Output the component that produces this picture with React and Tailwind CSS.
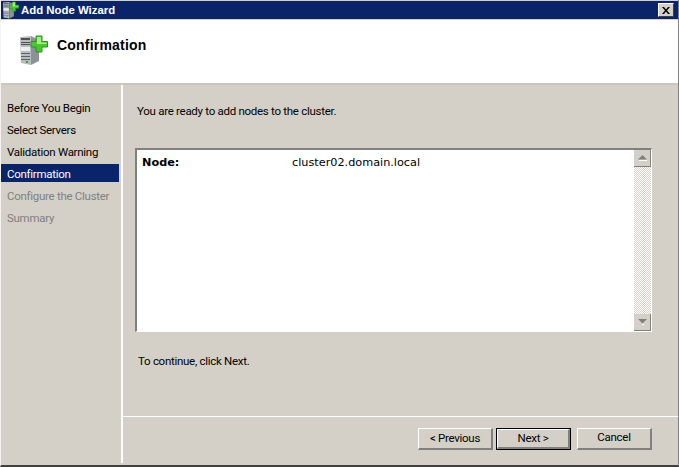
const steps = [
  { label: 'Before You Begin' },
  { label: 'Select Servers' },
  { label: 'Validation Warning' },
  { label: 'Confirmation', active: true },
  { label: 'Configure the Cluster', disabled: true },
  { label: 'Summary', disabled: true },
];

function NodeIcon({ className }) {
  return (
    <svg viewBox="0 0 28 30" className={className}>
      <path d="M0 2 L11 1 L11 30 L1 28 Z" fill="#b9bcbf" />
      <path d="M11 1 L19 5 L19 26 L11 30 Z" fill="#8d9296" />
      <path d="M1 3 H10 V5 H1 Z M1 7 H10 V8 H1 Z M1 9 H10 V10 H1 Z" fill="#4d5256" />
      <path d="M1 12 H10 V16 H1 Z" fill="#eceeef" />
      <path d="M1 18 H10 V19 H1 Z M1 21 H10 V22 H1 Z M1 24 H10 V25 H1 Z" fill="#5d6266" />
      <rect x="6" y="26" width="2" height="2" fill="#3fa535" />
      <path d="M16 1 H22 V6.500 H27.500 V12 H22 V17 H16 V12 H11 V6.500 H16 Z" fill="#45c92f" stroke="#2f8f22" strokeWidth="1" />
      <path d="M17 2 H21 V7.500 H26.500 V9 H17 Z" fill="#a4ee88" />
    </svg>
  );
}

function WizardButton({ children, primary, raised }) {
  const face = raised
    ? 'flex h-[22px] w-[75px] items-center justify-center pb-[2px] border-t border-l border-t-white border-l-white border-r-2 border-b-2 border-r-[#808080] border-b-[#808080] bg-[#d4d0c8] text-black'
    : 'flex h-[22px] w-[75px] items-center justify-center border-t border-l border-t-white border-l-white border-r-2 border-b-2 border-r-[#808080] border-b-[#808080] bg-[#d4d0c8] text-black';
  if (primary) {
    return (
      <div className="border border-black">
        <div className="flex h-[20px] w-[73px] items-center justify-center border-t border-l border-t-white border-l-white border-r-2 border-b-2 border-r-[#808080] border-b-[#808080] bg-[#d4d0c8] text-black">
          {children}
        </div>
      </div>
    );
  }
  return <div className={face}>{children}</div>;
}

export default function App() {
  return (
    <div className="flex h-[467px] w-[679px] flex-col overflow-hidden border-r border-b-2 border-l border-r-[#808080] border-b-[#404040] border-l-[#f4f3f0] bg-[#d4d0c8] font-['Roboto',sans-serif] text-[11.5px] tracking-[-0.28px] text-black">
      {/* title bar */}
      <div className="mt-px flex h-[18px] shrink-0 items-center justify-between bg-[#0a246a] pr-[4px] pl-[2px]">
        <div className="flex items-center gap-[2px]">
          <NodeIcon className="h-[18px] w-[16px]" />
          <span className="pt-[2px] font-['Liberation_Sans',sans-serif] text-[11.4px] font-bold tracking-normal text-white">Add Node Wizard</span>
        </div>
        <div className="flex h-[14px] w-[16px] items-center justify-center border-t border-l border-t-white border-l-white border-r border-b border-r-[#404040] border-b-[#404040] bg-[#d4d0c8]">
          <svg viewBox="0 0 8 7" className="h-[7px] w-[8px]">
            <path d="M0 0 H2 L4 2.500 L6 0 H8 L5 3.500 L8 7 H6 L4 4.500 L2 7 H0 L3 3.500 Z" fill="#000" />
          </svg>
        </div>
      </div>

      {/* header */}
      <div className="mt-px flex h-[63px] shrink-0 items-start gap-[9px] bg-white pt-[15px] pl-[19px]">
        <NodeIcon className="h-[30px] w-[28px]" />
        <h1 className="font-['Liberation_Sans',sans-serif] text-[14px] font-bold tracking-[0.2px] text-black">Confirmation</h1>
      </div>
      <div className="h-[2px] shrink-0 bg-[#c9c6bf]" />

      <div className="flex min-h-0 flex-1 pb-[2px]">
        {/* steps */}
        <nav className="flex w-[120px] shrink-0 flex-col pt-[13px]">
          {steps.map((step) => (
            <div
              key={step.label}
              className={
                step.active
                  ? 'mb-[4px] flex h-[18px] w-[118px] items-center bg-[#0a246a] pt-[4px] pl-[6px] text-white'
                  : step.disabled
                    ? 'mb-[4px] flex h-[18px] items-center pt-[4px] pl-[6px] text-[#808080]'
                    : 'mb-[4px] flex h-[18px] items-center pt-[4px] pl-[6px] text-black'
              }
            >
              {step.label}
            </div>
          ))}
        </nav>
        <div className="w-[2px] shrink-0 bg-white" />

        {/* content */}
        <div className="flex min-w-0 flex-1 flex-col">
          <div className="flex flex-1 flex-col pr-[26px] pl-[12px]">
            <p className="mt-[19px] pl-[2px] leading-[14px]">You are ready to add nodes to the cluster.</p>
            <div className="mt-[30px] flex h-[184px] border-t-2 border-r border-b border-l-2 border-t-[#808080] border-r-white border-b-white border-l-[#808080] bg-white">
              <div className="flex flex-1 pt-[6px] pl-[5px] font-['DejaVu_Sans',sans-serif] text-[11.25px] leading-[14px] tracking-normal">
                <span className="w-[150px] font-bold">Node:</span>
                <span>cluster02.domain.local</span>
              </div>
              <div className="flex w-[17px] flex-col bg-[repeating-conic-gradient(#d4d0c8_0_25%,#ffffff_0_50%)] bg-[length:2px_2px]">
                <div className="flex h-[17px] items-center justify-center border-r border-b border-r-[#808080] border-b-[#808080] bg-[#d4d0c8]">
                  <svg viewBox="0 0 9 6" className="h-[6px] w-[9px]">
                    <path d="M4.500 0 L9 4.500 H0 Z" fill="#808080" />
                    <path d="M1 5 H9 V6 H1 Z" fill="#fff" />
                  </svg>
                </div>
                <div className="flex-1" />
                <div className="flex h-[17px] items-center justify-center border-r border-b border-r-[#808080] border-b-[#808080] bg-[#d4d0c8]">
                  <svg viewBox="0 0 9 6" className="h-[6px] w-[9px]">
                    <path d="M0 0 H9 L4.500 4.500 Z" fill="#808080" />
                    <path d="M4 5 H6 V6 H4 Z" fill="#fff" />
                  </svg>
                </div>
              </div>
            </div>
            <p className="mt-[22px] pl-[3px] leading-[14px]">To continue, click Next.</p>
          </div>

          <div className="h-px shrink-0 bg-white" />
          <div className="flex h-[46px] shrink-0 items-start justify-end gap-[3px] pt-[11px] pr-[26px]">
            <WizardButton>&lt; Previous</WizardButton>
            <div className="mr-[3px]">
              <WizardButton primary>Next &gt;</WizardButton>
            </div>
            <WizardButton raised>Cancel</WizardButton>
          </div>
        </div>
      </div>
    </div>
  );
}
